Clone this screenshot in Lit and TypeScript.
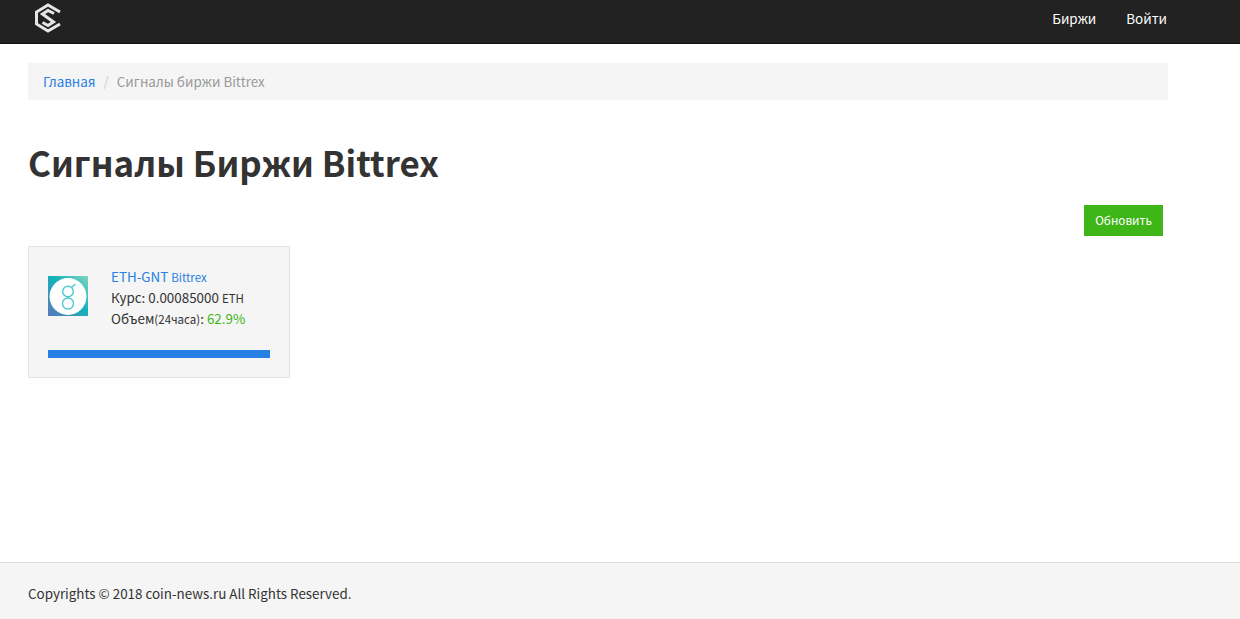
import { LitElement, html, css } from 'lit';
import { customElement } from 'lit/decorators.js';

@customElement('app-root')
export class AppRoot extends LitElement {
  static styles = css`
    :host {
      display: flex;
      flex-direction: column;
      min-height: 619px;
      background: #fff;
      color: #333;
      font-family: 'Noto Sans CJK SC', 'Noto Sans', sans-serif;
      font-size: 13.4px;
      line-height: 21px;
    }
    a {
      color: #2780e3;
      text-decoration: none;
    }
    .navbar {
      display: flex;
      align-items: flex-start;
      justify-content: space-between;
      height: 43px;
      padding: 0 73px 0 33px;
      background: #222;
      border-bottom: 1px solid #111;
    }
    .logo {
      display: block;
      width: 30px;
      height: 34px;
      margin-top: 1px;
    }
    .nav-links {
      display: flex;
      gap: 30px;
      padding-top: 8px;
    }
    .nav-links a {
      color: #fff;
    }
    main {
      flex: 1;
      padding: 19px 72px 0 28px;
    }
    .breadcrumb {
      display: flex;
      align-items: center;
      height: 37px;
      padding: 0 15px;
      background: #f5f5f5;
      color: #999;
    }
    .sep {
      margin: 0 8px;
      color: #ccc;
    }
    h1 {
      margin: 39px 0 0;
      font-size: 34.9px;
      line-height: 46px;
      font-weight: 700;
      color: #333;
    }
    .actions {
      display: flex;
      justify-content: flex-end;
      margin-top: 20px;
      padding-right: 5px;
    }
    .btn {
      height: 31px;
      width: 79px;
      padding: 0 0 2px;
      border: none;
      background: #3fb618;
      color: #fff;
      font: inherit;
      font-size: 11.7px;
    }
    .card {
      box-sizing: border-box;
      width: 262px;
      height: 132px;
      margin-top: 10px;
      padding: 19px;
      background: #f5f5f5;
      border: 1px solid #e3e3e3;
    }
    .card-body {
      display: flex;
      gap: 23px;
      height: 84px;
    }
    .coin {
      display: block;
      flex: none;
      width: 40px;
      height: 40px;
      margin-top: 10px;
    }
    .row {
      height: 21px;
    }
    .small {
      font-size: 11.5px;
    }
    .up {
      color: #3fb618;
    }
    .bar {
      height: 8px;
      background: #2780e3;
    }
    footer {
      height: 56px;
      padding-left: 28px;
      background: #f5f5f5;
      border-top: 1px solid #ddd;
      line-height: 61px;
    }
  `;

  render() {
    return html`
      <nav class="navbar">
        <svg class="logo" viewBox="0 0 30 34" fill="none" stroke="#e6e6e6" stroke-width="3">
          <path d="M27 11 15 4 3.500 11V23L15 30 27 23" />
          <path d="M21 12.500 15 9.500 9.500 13 20.500 21 15 24.500 9.500 21.500" />
        </svg>
        <div class="nav-links">
          <a href="#">Биржи</a>
          <a href="#">Войти</a>
        </div>
      </nav>
      <main>
        <div class="breadcrumb">
          <a href="#">Главная</a><span class="sep">/</span><span>Сигналы биржи Bittrex</span>
        </div>
        <h1>Сигналы Биржи Bittrex</h1>
        <div class="actions"><button class="btn">Обновить</button></div>
        <div class="card">
          <div class="card-body">
            <svg class="coin" viewBox="0 0 40 40">
              <defs>
                <linearGradient id="coin-bg" x1="1" y1="0" x2="0" y2="1">
                  <stop offset="0" stop-color="#7fd6c0" />
                  <stop offset="0.45" stop-color="#14b2bb" />
                  <stop offset="1" stop-color="#5a78b8" />
                </linearGradient>
              </defs>
              <rect width="40" height="40" fill="url(#coin-bg)" />
              <circle cx="20" cy="20.500" r="18.500" fill="#fff" />
              <g fill="none" stroke="#4fc8d0" stroke-width="1.400">
                <circle cx="20" cy="15.500" r="5.300" />
                <circle cx="20" cy="27.500" r="5.500" />
                <path d="M23.500 11.500 27.500 8" />
                <path d="M20 20.800V22" />
              </g>
            </svg>
            <div>
              <div class="row"><a href="#">ETH-GNT <span class="small">Bittrex</span></a></div>
              <div class="row">Курс: 0.00085000 <span class="small">ETH</span></div>
              <div class="row">Объем<span class="small">(24часа)</span>: <span class="up">62.9%</span></div>
            </div>
          </div>
          <div class="bar"></div>
        </div>
      </main>
      <footer>Copyrights © 2018 coin-news.ru All Rights Reserved.</footer>
    `;
  }
}
